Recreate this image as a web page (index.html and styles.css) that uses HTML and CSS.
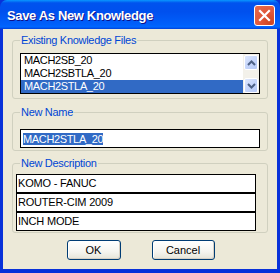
FILE: index.html
```html
<!DOCTYPE html>
<html lang="en">
<head>
  <meta charset="UTF-8" />
  <title>Save As New Knowledge</title>
  <link rel="stylesheet" href="styles.css">
</head>
<body>
  <div class="window">
    <div class="title-bar">
      <div class="title">Save As New Knowledge</div>
      <div class="close-btn">
        <svg width="13" height="13" viewBox="0 0 13 13">
          <path d="M2 2 L11 11 M11 2 L2 11" stroke="#fff" stroke-width="2.2" stroke-linecap="square" />
        </svg>
      </div>
    </div>

    <div class="client">
      <fieldset class="group group-files">
        <legend>Existing Knowledge Files</legend>
        <div class="listbox">
          <div class="items">
            <div class="item">MACH2SB_20</div>
            <div class="item">MACH2SBTLA_20</div>
            <div class="item selected">MACH2STLA_20</div>
          </div>
          <div class="scrollbar">
            <div class="scroll-btn">
              <svg width="9" height="6" viewBox="0 0 9 6"><path d="M1 5 L4.5 1.5 L8 5" fill="none" stroke="#4d6185" stroke-width="2" /></svg>
            </div>
            <div class="scroll-track"></div>
            <div class="scroll-btn">
              <svg width="9" height="6" viewBox="0 0 9 6"><path d="M1 1 L4.5 4.5 L8 1" fill="none" stroke="#4d6185" stroke-width="2" /></svg>
            </div>
          </div>
        </div>
      </fieldset>

      <fieldset class="group group-name">
        <legend>New Name</legend>
        <div class="textbox"><span class="sel-text">MACH2STLA_20</span></div>
      </fieldset>

      <fieldset class="group group-desc">
        <legend>New Description</legend>
        <div class="desc-rows">
          <div class="desc-row">KOMO - FANUC</div>
          <div class="desc-row">ROUTER-CIM 2009</div>
          <div class="desc-row">INCH MODE</div>
        </div>
      </fieldset>

      <div class="buttons">
        <div class="btn btn-ok">OK</div>
        <div class="btn btn-cancel">Cancel</div>
      </div>
    </div>
  </div>
</body>
</html>
```

FILE: styles.css
```css
:root {
  --face: #ece9d8;
  --group-border: #d0d0bf;
  --label: #0046d5;
  --select: #316ac5;
}

body {
  margin: 0;
  padding: 0;
  font-family: 'Liberation Sans', Arial, sans-serif;
  font-size: 11px;
}

.window {
  width: 280px;
  height: 273px;
  display: flex;
  flex-direction: column;
  background: #0831d9;
}

.title-bar {
  height: 29px;
  flex: none;
  display: flex;
  justify-content: space-between;
  align-items: center;
  padding: 0 5px 0 7px;
  border-radius: 7px 7px 0 0;
  background: linear-gradient(180deg, #0997ff 0%, #0053ee 10%, #0050ee 40%, #0060fb 85%, #0066ff 92%, #0058f0 96%, #003dd7 100%);
}

.title {
  color: #fff;
  font-family: 'Liberation Sans', Arial, sans-serif;
  font-weight: bold;
  font-size: 13px;
  letter-spacing: -0.35px;
  text-shadow: 1px 1px #0f1089;
  margin-top: 1px;
}

.close-btn {
  width: 19px;
  height: 19px;
  border: 1px solid #fff;
  border-radius: 3px;
  background: radial-gradient(circle at 80% 85%, #cc4622 0%, #e0573a 45%, #e76d4e 100%);
  display: flex;
  align-items: center;
  justify-content: center;
  margin-top: 1px;
}

.client {
  flex: 1;
  background: var(--face);
  margin: 0 3px 4px 3px;
  padding: 5px 9px 0 9px;
  display: flex;
  flex-direction: column;
}

.group {
  margin: 0;
  padding: 0 7px;
  border: 1px solid var(--group-border);
  border-radius: 3px;
  min-width: 0;
}

.group legend {
  color: var(--label);
  padding: 0 1px;
  line-height: 12px;
  height: 12px;
  letter-spacing: -0.3px;
}

.group-files { padding-top: 7px; padding-bottom: 4px; }
.group-name { margin-top: 7px; padding-top: 11px; padding-bottom: 2px; }
.group-desc { margin-top: 6px; padding-top: 5px; padding-bottom: 1px; }

.listbox {
  height: 39px;
  border: 1px solid #000;
  background: #fff;
  display: flex;
}

.items {
  flex: 1;
}

.item {
  height: 13px;
  line-height: 13px;
  padding-left: 3px;
  color: #000;
  letter-spacing: -0.35px;
}

.item.selected {
  background: var(--select);
  color: #fff;
}

.scrollbar {
  width: 16px;
  display: flex;
  flex-direction: column;
  background: #f3f1ea;
}

.scroll-btn {
  height: 15px;
  margin: 1px 1px 0 1px;
  border: 1px solid #fff;
  border-radius: 2px;
  background: linear-gradient(135deg, #dde7fd 0%, #c6d6fb 50%, #b4c8f6 100%);
  display: flex;
  align-items: center;
  justify-content: center;
  box-sizing: border-box;
}

.scroll-track {
  flex: 1;
}

.textbox {
  height: 17px;
  border: 1px solid #000;
  background: #fff;
  padding-left: 2px;
  display: flex;
  align-items: center;
}

.sel-text {
  background: var(--select);
  color: #fff;
  line-height: 12px;
  letter-spacing: -0.35px;
}

.desc-rows {
  margin-left: -4px;
  width: 240px;
}

.desc-row {
  height: 17px;
  line-height: 17px;
  border: 1px solid #000;
  background: #fff;
  padding-left: 1px;
  letter-spacing: -0.2px;
}

.buttons {
  display: flex;
  justify-content: center;
  gap: 31px;
  margin-top: 7px;
  padding-left: 1px;
}

.btn {
  height: 18px;
  line-height: 18px;
  border: 1px solid #003c74;
  border-radius: 3px;
  text-align: center;
  color: #000;
  background: linear-gradient(180deg, #fff 0%, #f5f4ef 60%, #e6e4d8 100%);
  box-shadow: inset -1px -1px #d6d0c5, inset 1px 1px #fff;
}

.btn-ok { width: 52px; }
.btn-cancel { width: 61px; }
```
